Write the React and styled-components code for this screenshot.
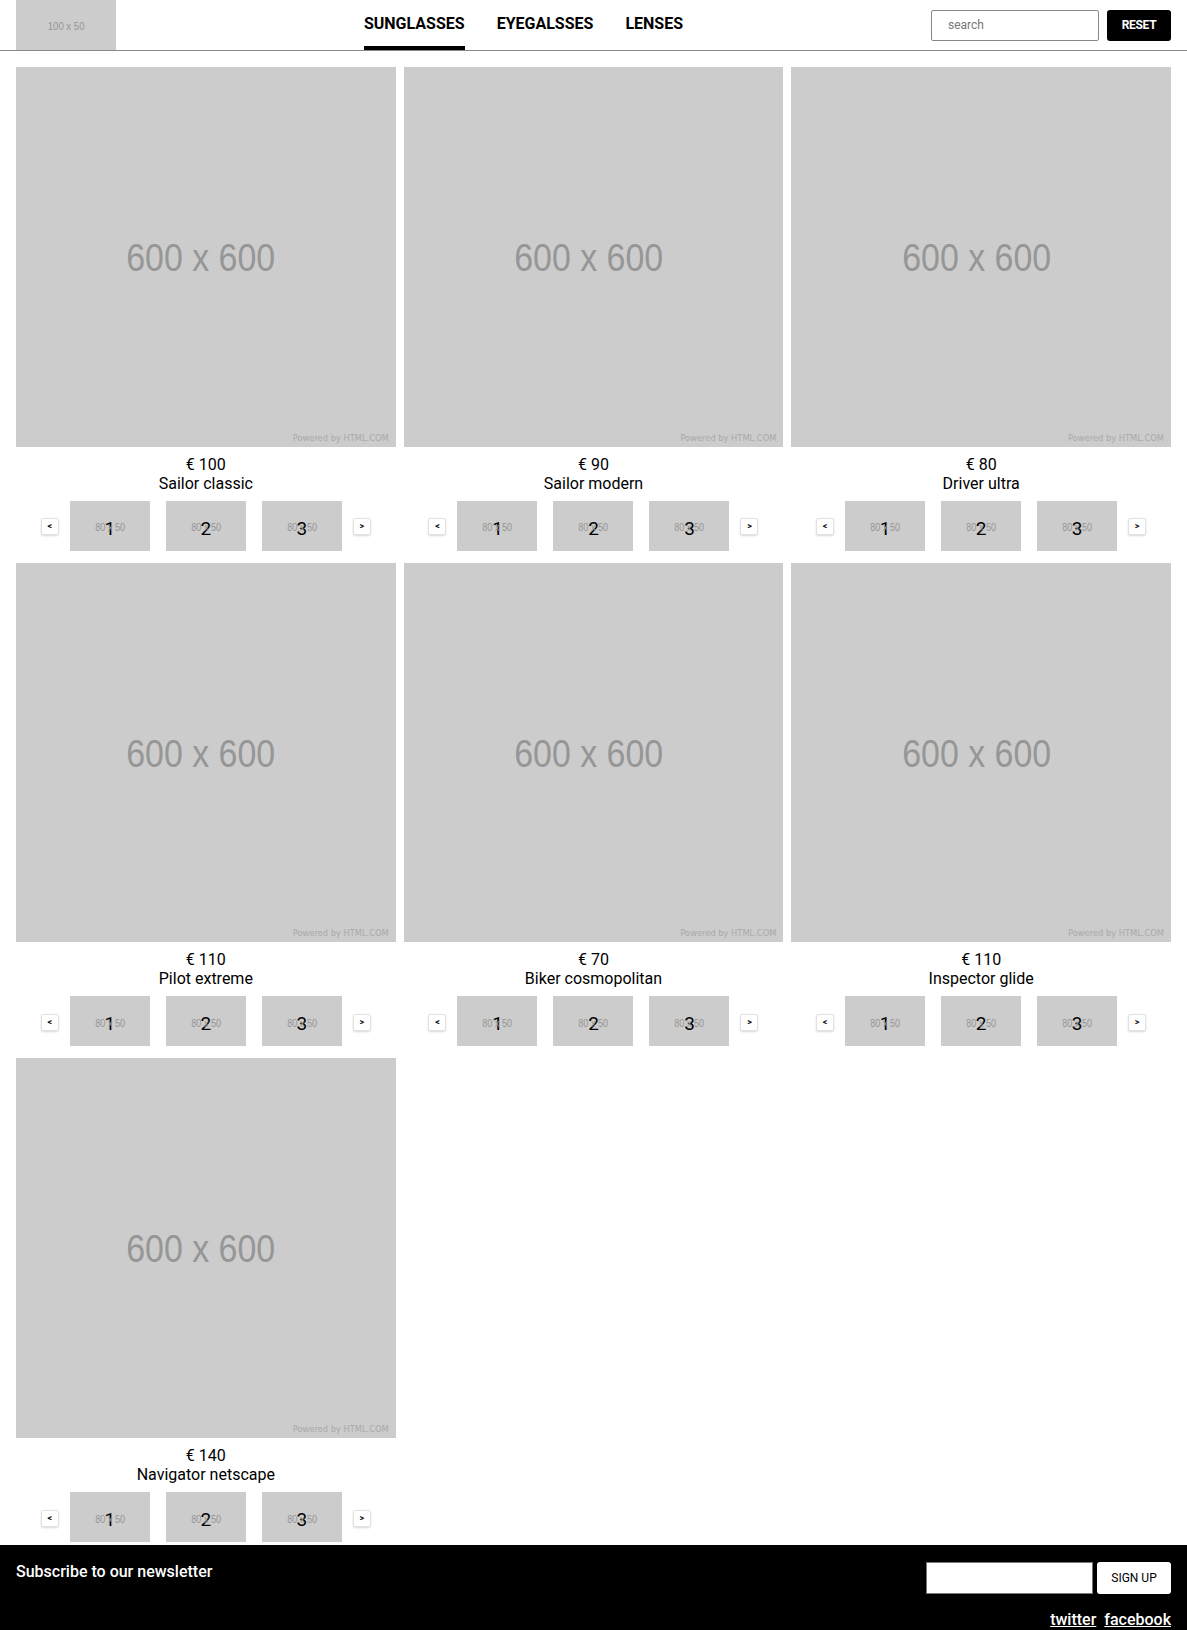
import React from 'react';
import styled, { createGlobalStyle } from 'styled-components';

const GlobalStyle = createGlobalStyle`
	html, body {
		margin: 0;
		padding: 0;
		background: #fff;
		font-family: Roboto, "Liberation Sans", Arial, sans-serif;
		color: #000;
	}
	* { box-sizing: border-box; }
`;

const Header = styled.header`
	display: flex;
	justify-content: space-between;
	align-items: stretch;
	height: 51px;
	padding: 0 16px;
	border-bottom: 1px solid #8a8a8a;
`;
const Logo = styled.div`
	width: 100px;
	height: 50px;
	background: #ccc;
	display: flex;
	align-items: center;
	justify-content: center;
`;
const Nav = styled.nav`
	display: flex;
	gap: 32px;
`;
const NavItem = styled.a`
	display: flex;
	align-items: center;
	font-size: 16px;
	font-weight: 700;
	text-transform: uppercase;
	color: #000;
	text-decoration: none;
	border-bottom: 4px solid ${p => (p.$active ? '#000' : 'transparent')};
`;
const Tools = styled.div`
	display: flex;
	align-items: center;
	gap: 8px;
`;
const SearchInput = styled.input`
	width: 168px;
	height: 31px;
	border: 1px solid #888;
	border-radius: 2px;
	padding: 0 16px;
	font-family: Roboto, sans-serif;
	font-size: 12px;
	&::placeholder { color: #777; }
`;
const DarkButton = styled.button`
	width: 64px;
	height: 31px;
	background: #000;
	color: #fff;
	border: none;
	border-radius: 3px;
	font-family: Roboto, sans-serif;
	font-weight: 700;
	font-size: 12px;
	letter-spacing: -0.3px;
`;

const Grid = styled.main`
	display: grid;
	grid-template-columns: repeat(3, 1fr);
	column-gap: 8px;
	row-gap: 12px;
	padding: 16px 16px 3px;
`;
const Card = styled.article`
	display: flex;
	flex-direction: column;
	align-items: center;
`;
const Picture = styled.div`
	position: relative;
	width: 100%;
	aspect-ratio: 1 / 1;
	background: #ccc;
	display: flex;
	align-items: center;
	justify-content: center;
`;
const PlaceholderLabel = styled.span`
	display: inline-block;
	font-family: "Liberation Sans", Arial, sans-serif;
	font-size: ${p => p.$size}px;
	color: #969696;
	white-space: pre;
	transform: scaleX(0.87);
	margin-top: ${p => p.$shift || 0}px;
	margin-right: ${p => p.$nudge || 0}px;
`;
const Powered = styled.span`
	position: absolute;
	right: 7px;
	bottom: 4px;
	font-family: "DejaVu Sans", Verdana, sans-serif;
	font-size: 8.3px;
	color: #a9a9a9;
`;
const Info = styled.div`
	padding-top: 8px;
	text-align: center;
	font-size: 16px;
	line-height: 19px;
`;
const Thumbs = styled.div`
	display: flex;
	align-items: center;
	margin-top: 8px;
	gap: 16px;
`;
const Arrow = styled.button`
	width: 18px;
	height: 17px;
	padding: 0;
	margin: ${p => (p.$side === 'left' ? '2px -5px 0 0' : '2px 0 0 -5px')};
	background: #fff;
	border: 1px solid #e2e2e2;
	border-radius: 2px;
	box-shadow: 0 1px 2px rgba(0, 0, 0, 0.15);
	font-family: Roboto, sans-serif;
	font-size: 9px;
	font-weight: 700;
	line-height: 1;
`;
const Thumb = styled.div`
	width: 80px;
	height: 50px;
	background: #ccc;
	display: grid;
	place-items: center;
	& > * { grid-area: 1 / 1; }
`;
const ThumbNumber = styled.span`
	font-size: 19px;
	color: #000;
	margin-top: 5px;
`;

const Footer = styled.footer`
	display: flex;
	justify-content: space-between;
	align-items: flex-start;
	background: #000;
	color: #fff;
	padding: 17px 16px 4px;
`;
const FooterTitle = styled.div`
	font-size: 16px;
	font-weight: 500;
	line-height: 19px;
`;
const FooterSide = styled.div`
	display: flex;
	flex-direction: column;
	align-items: flex-end;
`;
const SignupRow = styled.form`
	display: flex;
	gap: 4px;
	margin: 0;
`;
const EmailInput = styled.input`
	width: 167px;
	height: 32px;
	border: 1px solid #767676;
	background: #fff;
`;
const LightButton = styled.button`
	width: 74px;
	height: 32px;
	background: #fff;
	color: #000;
	border: none;
	border-radius: 3px;
	font-family: Roboto, sans-serif;
	font-size: 12px;
`;
const Links = styled.div`
	display: flex;
	gap: 8px;
	margin-top: 16px;
`;
const SocialLink = styled.a`
	color: #fff;
	font-size: 16px;
	font-weight: 500;
	line-height: 19px;
	text-decoration: underline;
`;

const products = [
	{ price: 100, name: 'Sailor classic' },
	{ price: 90, name: 'Sailor modern' },
	{ price: 80, name: 'Driver ultra' },
	{ price: 110, name: 'Pilot extreme' },
	{ price: 70, name: 'Biker cosmopolitan' },
	{ price: 110, name: 'Inspector glide' },
	{ price: 140, name: 'Navigator netscape' },
];

const ProductCard = ({ product }) =>
	<Card>
		<Picture>
			<PlaceholderLabel $size={39} $nudge={10} $shift={2}>600 x 600</PlaceholderLabel>
			<Powered>Powered by HTML.COM</Powered>
		</Picture>
		<Info>
			<div>€ {product.price}</div>
			<div>{product.name}</div>
		</Info>
		<Thumbs>
			<Arrow $side="left">&lt;</Arrow>
			{[1, 2, 3].map(n =>
				<Thumb key={n}>
					<PlaceholderLabel $size={10.5} $shift={3}>80 x 50</PlaceholderLabel>
					<ThumbNumber>{n}</ThumbNumber>
				</Thumb>
			)}
			<Arrow $side="right">&gt;</Arrow>
		</Thumbs>
	</Card>

const App = () =>
	<>
		<GlobalStyle />
		<Header>
			<Logo><PlaceholderLabel $size={11} $shift={2}>100 x 50</PlaceholderLabel></Logo>
			<Nav>
				<NavItem href="#" $active>Sunglasses</NavItem>
				<NavItem href="#">Eyegalsses</NavItem>
				<NavItem href="#">Lenses</NavItem>
			</Nav>
			<Tools>
				<SearchInput placeholder="search" />
				<DarkButton>RESET</DarkButton>
			</Tools>
		</Header>
		<Grid>
			{products.map((p, i) => <ProductCard key={i} product={p} />)}
		</Grid>
		<Footer>
			<FooterTitle>Subscribe to our newsletter</FooterTitle>
			<FooterSide>
				<SignupRow onSubmit={e => e.preventDefault()}>
					<EmailInput type="email" />
					<LightButton type="submit">SIGN UP</LightButton>
				</SignupRow>
				<Links>
					<SocialLink href="#">twitter</SocialLink>
					<SocialLink href="#">facebook</SocialLink>
				</Links>
			</FooterSide>
		</Footer>
	</>

export default App;
